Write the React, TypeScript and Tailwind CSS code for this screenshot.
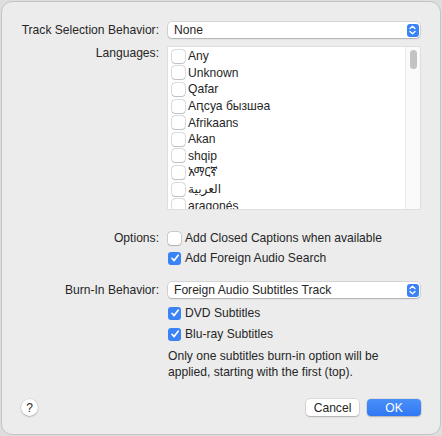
import React from "react";

const font = { fontFamily: '"Liberation Sans", "Noto Sans", Arial, sans-serif' };

function Chevrons() {
  return (
    <svg width="7" height="10" viewBox="0 0 7 10" fill="none">
      <path d="M1 3.6 L3.5 1.3 L6 3.6" stroke="white" strokeWidth="1.3" strokeLinecap="round" strokeLinejoin="round" />
      <path d="M1 6.4 L3.5 8.7 L6 6.4" stroke="white" strokeWidth="1.3" strokeLinecap="round" strokeLinejoin="round" />
    </svg>
  );
}

function Popup({ value }: { value: string }) {
  return (
    <div className="flex h-[16px] w-[252px] items-center justify-between rounded-[4px] bg-white pl-[6px] pr-[1.5px] shadow-[0_0_0_0.5px_rgba(0,0,0,0.18),0_1px_1.5px_rgba(0,0,0,0.18)]">
      <span className="leading-[16px] text-[#262626]">{value}</span>
      <div className="flex h-[13px] w-[12px] items-center justify-center rounded-[3px] bg-[#3a83f6]">
        <Chevrons />
      </div>
    </div>
  );
}

function Check({ checked }: { checked?: boolean }) {
  if (checked) {
    return (
      <div className="flex h-[13px] w-[13px] shrink-0 items-center justify-center rounded-[3px] bg-[#3a83f6]">
        <svg width="10" height="10" viewBox="0 0 10 10" fill="none">
          <path d="M2 5.3 L4.1 7.6 L8.2 2.2" stroke="white" strokeWidth="1.7" strokeLinecap="round" strokeLinejoin="round" />
        </svg>
      </div>
    );
  }
  return (
    <div className="h-[13px] w-[13px] shrink-0 rounded-[3px] bg-white shadow-[0_0_0_0.5px_rgba(0,0,0,0.25),0_0.5px_1px_rgba(0,0,0,0.15)]" />
  );
}

const languages = [
  "Any",
  "Unknown",
  "Qafar",
  "Aԥсуа бызшәа",
  "Afrikaans",
  "Akan",
  "shqip",
  "አማርኛ",
  "العربية",
  "aragonés",
];

export default function App() {
  return (
    <div className="h-[436px] w-[442px] bg-[#dedede] p-[1px]" style={font}>
      <div className="flex h-[434px] w-[440px] flex-col rounded-[11px] border border-[#c4c4c4] bg-[#ececec] text-[12.1px] leading-[16px] text-[#262626]">
        {/* Track selection */}
        <div className="mt-[20px] flex h-[16px] items-center">
          <div className="w-[157px] text-right">Track Selection Behavior:</div>
          <div className="ml-[9px]">
            <Popup value="None" />
          </div>
        </div>

        {/* Languages */}
        <div className="mt-[9px] flex items-start">
          <div className="mt-[-2px] w-[157px] text-right">Languages:</div>
          <div className="ml-[9px] flex h-[162px] w-[252px] overflow-hidden bg-white shadow-[0_0_0_0.5px_rgba(0,0,0,0.12)]">
            <div className="flex-1 overflow-hidden pl-[4px] pt-[1px]">
              {languages.map((l) => (
                <div key={l} className="flex h-[16.6px] items-center gap-[3px]">
                  <Check />
                  <span className="leading-[16px]" style={{ fontFamily: '"Liberation Sans", "Noto Sans", "Noto Sans Ethiopic", "DejaVu Sans", sans-serif' }}>{l}</span>
                </div>
              ))}
            </div>
            <div className="flex w-[15px] justify-center border-l border-[#ededed] bg-[#fafafa] pt-[3px]">
              <div className="h-[19px] w-[7px] rounded-full bg-[#c3c3c3]" />
            </div>
          </div>
        </div>

        {/* Options */}
        <div className="mt-[21px] flex items-start">
          <div className="w-[157px] text-right">Options:</div>
          <div className="ml-[9px] flex flex-col gap-[4px]">
            <div className="flex h-[16px] items-center gap-[4px]">
              <Check />
              <span>Add Closed Captions when available</span>
            </div>
            <div className="flex h-[16px] items-center gap-[4px]">
              <Check checked />
              <span>Add Foreign Audio Search</span>
            </div>
          </div>
        </div>

        {/* Burn-in */}
        <div className="mt-[16px] flex h-[16px] items-center">
          <div className="w-[157px] text-right">Burn-In Behavior:</div>
          <div className="ml-[9px]">
            <Popup value="Foreign Audio Subtitles Track" />
          </div>
        </div>

        <div className="ml-[166px] mt-[7px] flex flex-col gap-[5px]">
          <div className="flex h-[16px] items-center gap-[4px]">
            <Check checked />
            <span>DVD Subtitles</span>
          </div>
          <div className="flex h-[16px] items-center gap-[4px]">
            <Check checked />
            <span>Blu-ray Subtitles</span>
          </div>
        </div>

        <div className="ml-[166px] mt-[6px] w-[250px]">
          Only one subtitles burn-in option will be applied, starting with the first (top).
        </div>

        {/* Bottom */}
        <div className="mt-[19px] flex items-center pl-[19px] pr-[19px]">
          <div className="flex h-[17px] w-[17px] items-center justify-center rounded-full bg-white text-[12px] shadow-[0_0_0_0.5px_rgba(0,0,0,0.15),0_1px_1.5px_rgba(0,0,0,0.2)]">
            ?
          </div>
          <div className="flex-1" />
          <button className="flex h-[17px] w-[53px] items-center justify-center rounded-[4px] bg-white shadow-[0_0_0_0.5px_rgba(0,0,0,0.15),0_1px_1.5px_rgba(0,0,0,0.2)]">
            Cancel
          </button>
          <button className="ml-[8px] flex h-[17px] w-[54px] items-center justify-center rounded-[4px] bg-gradient-to-b from-[#4a8ff8] to-[#2f78f4] text-white shadow-[0_0_0_0.5px_rgba(0,0,0,0.12),0_1px_1.5px_rgba(0,0,0,0.2)]">
            OK
          </button>
        </div>
      </div>
    </div>
  );
}
